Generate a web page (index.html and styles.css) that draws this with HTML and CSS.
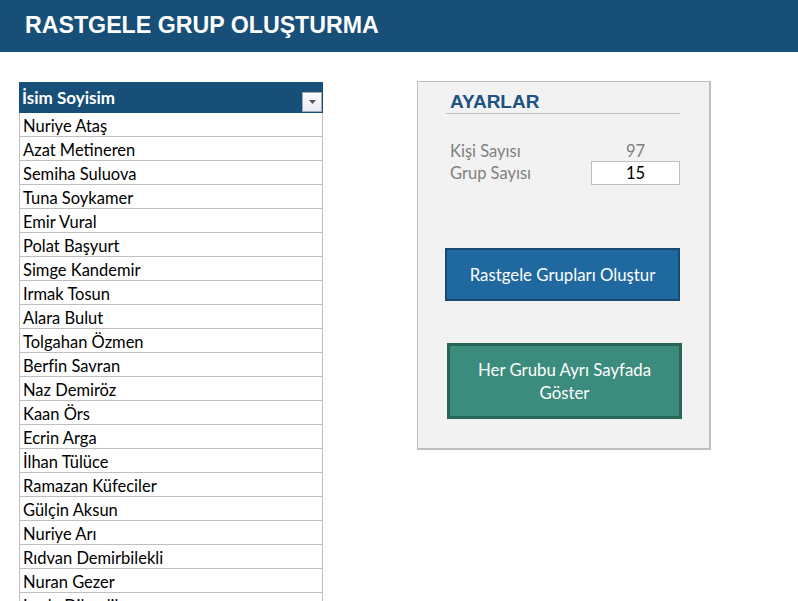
FILE: index.html
```html
<!DOCTYPE html>
<html lang="tr">
<head>
<meta charset="utf-8">
<title>Rastgele Grup Oluşturma</title>
<link rel="stylesheet" href="styles.css">
</head>
<body>
<header class="topbar">
  <h1 class="title">RASTGELE GRUP OLUŞTURMA</h1>
</header>
<main class="content">
  <section class="list">
    <div class="list-head">
      <span>İsim Soyisim</span>
      <span class="filter"><svg width="7" height="4" viewBox="0 0 7 4"><path d="M0 0h7L3.5 4z" fill="#555"/></svg></span>
    </div>
    <div class="row">Nuriye Ataş</div>
    <div class="row">Azat Metineren</div>
    <div class="row">Semiha Suluova</div>
    <div class="row">Tuna Soykamer</div>
    <div class="row">Emir Vural</div>
    <div class="row">Polat Başyurt</div>
    <div class="row">Simge Kandemir</div>
    <div class="row">Irmak Tosun</div>
    <div class="row">Alara Bulut</div>
    <div class="row">Tolgahan Özmen</div>
    <div class="row">Berfin Savran</div>
    <div class="row">Naz Demiröz</div>
    <div class="row">Kaan Örs</div>
    <div class="row">Ecrin Arga</div>
    <div class="row">İlhan Tülüce</div>
    <div class="row">Ramazan Küfeciler</div>
    <div class="row">Gülçin Aksun</div>
    <div class="row">Nuriye Arı</div>
    <div class="row">Rıdvan Demirbilekli</div>
    <div class="row">Nuran Gezer</div>
    <div class="row">Leyla Dilmelik</div>
  </section>
  <section class="panel">
    <h2 class="panel-title">AYARLAR</h2>
    <div class="settings">
      <div class="setting setting-first">
        <span class="label">Kişi Sayısı</span>
        <span class="value">97</span>
      </div>
      <div class="setting">
        <span class="label">Grup Sayısı</span>
        <span class="value input">15</span>
      </div>
    </div>
    <button class="btn btn-blue">Rastgele Grupları Oluştur</button>
    <button class="btn btn-green">Her Grubu Ayrı Sayfada<br>Göster</button>
  </section>
</main>
</body>
</html>
```

FILE: styles.css
```css
* { box-sizing: border-box; }
html, body { margin: 0; padding: 0; background: #fff; }
body {
  width: 798px;
  height: 601px;
  overflow: hidden;
  font-family: Lato, "Open Sans", sans-serif;
}
.topbar {
  height: 52px;
  background: #174f78;
  display: flex;
  align-items: center;
  padding-left: 25px;
}
.title {
  margin: 0;
  font-family: "Liberation Sans", Arial, sans-serif;
  font-weight: bold;
  font-size: 23.2px;
  color: #fff;
  padding-bottom: 2px;
}
.content {
  display: flex;
  align-items: flex-start;
  padding-top: 29px;
  padding-left: 19px;
}
.list {
  width: 304px;
  border-left: 1px solid #bfbfbf;
  border-right: 1px solid #bfbfbf;
  margin-top: 1px;
}
.list-head {
  height: 31px;
  background: #174f78;
  color: #fff;
  font-weight: bold;
  font-size: 17px;
  display: flex;
  align-items: center;
  justify-content: space-between;
  padding: 0 1px 0 3px;
  margin: 0 -1px;
}
.filter {
  width: 20px;
  height: 20px;
  margin-top: 8px;
  background: linear-gradient(#fbfbfb, #e9ecf1);
  border: 1px solid #9da8b6;
  display: flex;
  align-items: center;
  justify-content: center;
}
.row {
  height: 24px;
  border-bottom: 1px solid #bfbfbf;
  font-size: 16.5px;
  color: #000;
  padding: 2px 0 0 3px;
  line-height: 22px;
}
.panel {
  margin-left: 94px;
  width: 294px;
  height: 369px;
  background: #f2f2f2;
  border: 1px solid #bfbfbf;
  border-right-width: 2px;
  border-bottom-width: 2px;
  padding: 0 28px;
  display: flex;
  flex-direction: column;
}
.panel-title {
  margin: 10px 0 0 0;
  font-family: "Liberation Sans", Arial, sans-serif;
  font-weight: bold;
  font-size: 19px;
  color: #1d5283;
  height: 22px;
  line-height: 20px;
  padding-left: 4px;
  border-bottom: 1px solid #bfbfbf;
  width: 234px;
}
.settings {
  margin-top: 25px;
  display: flex;
  flex-direction: column;
}
.setting {
  display: flex;
  align-items: center;
  height: 24px;
  width: 234px;
}
.setting-first { height: 22px; padding-top: 1px; }
.label {
  flex: 1;
  padding-left: 4px;
  color: #7f7f7f;
  font-size: 16.5px;
}
.value {
  width: 89px;
  text-align: center;
  color: #7f7f7f;
  font-size: 16.5px;
}
.input {
  height: 24px;
  line-height: 22px;
  background: #fff;
  border: 1px solid #bfbfbf;
  color: #000;
}
.btn {
  font-family: Lato, "Open Sans", sans-serif;
  font-size: 16.8px;
  color: #fff;
  cursor: pointer;
  text-align: center;
  width: 235px;
  padding: 0;
}
.btn-blue {
  margin-top: 63px;
  margin-left: -1px;
  height: 53px;
  background: #1f68a0;
  border: 2px solid #164c74;
}
.btn-green {
  margin-top: 42px;
  margin-left: 1px;
  height: 76px;
  background: #3b8c7c;
  border: 3px solid #276556;
  line-height: 23px;
}
```
